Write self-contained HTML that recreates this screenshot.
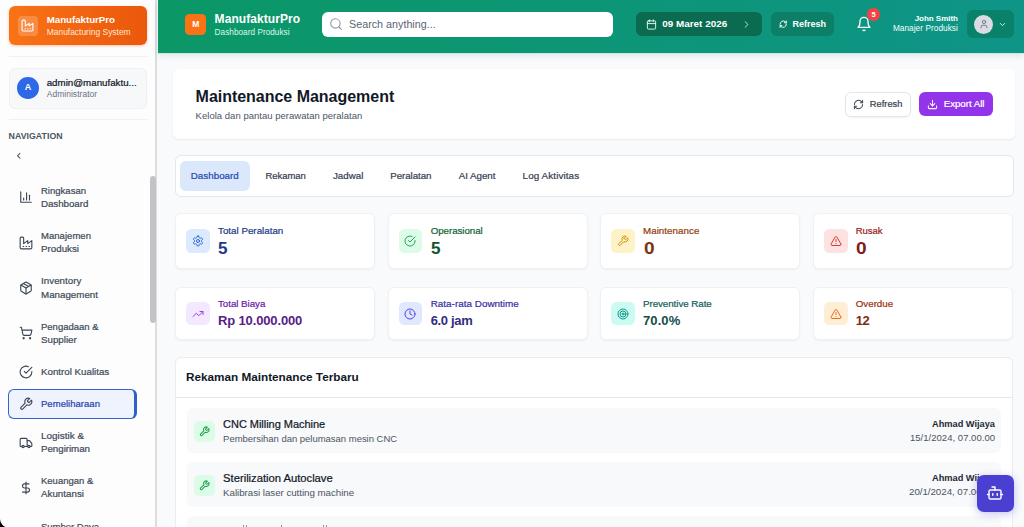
<!DOCTYPE html>
<html lang="id">
<head>
<meta charset="utf-8">
<title>ManufakturPro - Maintenance Management</title>
<style>
*{box-sizing:border-box;margin:0;padding:0}
html,body{width:1024px;height:527px;overflow:hidden;background:#f8fafc;font-family:"Liberation Sans",sans-serif;color:#1f2937}
svg{display:block;position:absolute;fill:none;stroke-linecap:round;stroke-linejoin:round}
.a{position:absolute}
.t{position:absolute;white-space:nowrap;line-height:1}
#side{position:absolute;left:0;top:0;width:157px;height:527px;background:#fdfdfe;border-right:2px solid #dcdce1}
#brand{position:absolute;left:8.5px;top:5.5px;width:138px;height:39px;border-radius:6px;background:linear-gradient(90deg,#f97316,#ea580c);box-shadow:0 1px 3px rgba(234,88,12,.35)}
#bico{position:absolute;left:17.5px;top:15.5px;width:20px;height:20px;border-radius:4px;background:rgba(255,255,255,.2)}
.hr{position:absolute;left:9px;width:138px;height:1px;background:#eef0f3}
#user{position:absolute;left:8.5px;top:67.5px;width:138px;height:41px;border-radius:6px;background:#f7f8fa;border:1px solid #eff0f3}
#av{position:absolute;left:17px;top:77px;width:21.5px;height:21.5px;border-radius:50%;background:#2c68e8}
#active{position:absolute;left:8px;top:388.5px;width:129.2px;height:30.3px;border-radius:6px;background:#eef3fe;border:1.3px solid #3463c9;border-right:3px solid #2f5fcc}
#sbar{position:absolute;left:150px;top:176px;width:5.5px;height:146.5px;border-radius:3px;background:#c3c3c7}
#top{position:absolute;left:158px;top:0;width:866px;height:52.9px;background:linear-gradient(90deg,#0b9766 0%,#0c9676 50%,#0f9488 100%);box-shadow:0 1px 0 #c4ebe0,0 3px 7px rgba(15,23,42,.09)}
#logo{position:absolute;left:185px;top:14px;width:21px;height:20.5px;border-radius:4.5px;background:#f97316}
#search{position:absolute;left:321.5px;top:11.5px;width:291.7px;height:25px;border-radius:6px;background:#fff}
#date{position:absolute;left:635.5px;top:12px;width:126.5px;height:24px;border-radius:6px;background:#0b6b51}
#hrefresh{position:absolute;left:771.3px;top:12px;width:62.7px;height:24px;border-radius:6px;background:#0c8067}
#badge{position:absolute;left:867.3px;top:8px;width:12.5px;height:12.5px;border-radius:50%;background:#ef4444}
#ubtn{position:absolute;left:967px;top:9.5px;width:47px;height:28.5px;border-radius:6px;background:#0a8169}
#uav{position:absolute;left:974px;top:14.5px;width:19px;height:19px;border-radius:50%;background:#d9dde3}
.card{position:absolute;background:#fff;border-radius:6px}
.st{position:absolute;width:200px;background:#fff;border-radius:6px;border:1px solid #eff1f4;box-shadow:0 1px 2px rgba(15,23,42,.05)}
.ib{position:absolute;width:23.5px;height:23.5px;border-radius:5.5px}
.ib svg{left:5.75px;top:5.75px;width:12px;height:12px;stroke-width:2}
.row{position:absolute;left:187px;width:814.3px;height:45px;border-radius:6px;background:#f8f9fa}
.rib{position:absolute;left:193.5px;width:21px;height:21.3px;border-radius:5px;background:#dcfce7}
.rib svg{left:5px;top:5.15px;width:11px;height:11px;stroke:#22a355;stroke-width:2.2}
.nic{width:14px;height:14px;left:18.9px;stroke:#3b4453;stroke-width:1.9}
</style>
</head>
<body>
<div id="side"></div>
<div id="brand"></div>
<div id="bico"><svg viewBox="0 0 24 24" style="left:3.5px;top:3.5px;width:13px;height:13px;stroke:#fff;stroke-width:2"><path d="M2 20a2 2 0 0 0 2 2h16a2 2 0 0 0 2-2V8l-7 5V8l-7 5V4a2 2 0 0 0-2-2H4a2 2 0 0 0-2 2Z"/><path d="M17 18h1"/><path d="M12 18h1"/><path d="M7 18h1"/></svg></div>
<div class="hr" style="top:56px"></div>
<div id="user"></div>
<div id="av"></div>
<div class="hr" style="top:119px"></div>
<svg viewBox="0 0 24 24" style="left:13.65px;top:151.05px;width:9.5px;height:9.5px;stroke:#59616e;stroke-width:2.8"><path d="M15 18l-6-6 6-6"/></svg>

<div id="active"></div>
<svg class="nic" style="top:190px" viewBox="0 0 24 24"><path d="M3 3v18h18"/><path d="M18 17V9"/><path d="M13 17V5"/><path d="M8 17v-3"/></svg>
<svg class="nic" style="top:235.5px" viewBox="0 0 24 24"><path d="M2 20a2 2 0 0 0 2 2h16a2 2 0 0 0 2-2V8l-7 5V8l-7 5V4a2 2 0 0 0-2-2H4a2 2 0 0 0-2 2Z"/><path d="M17 18h1"/><path d="M12 18h1"/><path d="M7 18h1"/></svg>
<svg class="nic" style="top:280.7px" viewBox="0 0 24 24"><path d="M21 8a2 2 0 0 0-1-1.73l-7-4a2 2 0 0 0-2 0l-7 4A2 2 0 0 0 3 8v8a2 2 0 0 0 1 1.73l7 4a2 2 0 0 0 2 0l7-4A2 2 0 0 0 21 16Z"/><path d="m3.3 7 8.7 5 8.7-5"/><path d="M12 22V12"/><path d="m7.5 4.27 9 5.15"/></svg>
<svg class="nic" style="top:326px" viewBox="0 0 24 24"><circle cx="8" cy="21" r="1"/><circle cx="19" cy="21" r="1"/><path d="M2.05 2.05h2l2.66 12.42a2 2 0 0 0 2 1.58h9.78a2 2 0 0 0 1.95-1.57l1.65-7.43H5.12"/></svg>
<svg class="nic" style="top:365px" viewBox="0 0 24 24"><path d="M22 11.08V12a10 10 0 1 1-5.93-9.14"/><path d="m9 11 3 3L22 4"/></svg>
<svg class="nic" style="top:396.5px" viewBox="0 0 24 24"><path d="M14.7 6.3a1 1 0 0 0 0 1.4l1.6 1.6a1 1 0 0 0 1.4 0l3.77-3.77a6 6 0 0 1-7.94 7.94l-6.91 6.91a2.12 2.12 0 0 1-3-3l6.91-6.91a6 6 0 0 1 7.94-7.94l-3.76 3.76z"/></svg>
<svg class="nic" style="top:435.6px" viewBox="0 0 24 24"><path d="M14 18V6a2 2 0 0 0-2-2H4a2 2 0 0 0-2 2v11a1 1 0 0 0 1 1h2"/><path d="M15 18H9"/><path d="M19 18h2a1 1 0 0 0 1-1v-3.65a1 1 0 0 0-.22-.624l-3.48-4.35A1 1 0 0 0 17.52 8H14"/><circle cx="17" cy="18" r="2"/><circle cx="7" cy="18" r="2"/></svg>
<svg class="nic" style="top:481px" viewBox="0 0 24 24"><path d="M12 2v20"/><path d="M17 5H9.5a3.5 3.5 0 0 0 0 7h5a3.5 3.5 0 0 1 0 7H6"/></svg>
<div id="sbar"></div>

<div id="top"></div>
<div id="logo"></div>
<div id="search"></div>
<svg viewBox="0 0 24 24" style="left:329px;top:17px;width:14px;height:14px;stroke:#9299a4;stroke-width:1.9"><circle cx="11" cy="11" r="8"/><path d="m21 21-4.3-4.3"/></svg>
<div id="date"></div>
<svg viewBox="0 0 24 24" style="left:646.1px;top:18.5px;width:11px;height:11px;stroke:#e6fff6;stroke-width:2"><rect x="3" y="4" width="18" height="18" rx="2"/><path d="M16 2v4"/><path d="M8 2v4"/><path d="M3 10h18"/></svg>
<svg viewBox="0 0 24 24" style="left:740.7px;top:18.5px;width:11px;height:11px;stroke:#8fd0bc;stroke-width:2.2"><path d="m9 18 6-6-6-6"/></svg>
<div id="hrefresh"></div>
<svg viewBox="0 0 24 24" style="left:779px;top:19.8px;width:8.4px;height:8.4px;stroke:#f0fffa;stroke-width:2.8"><path d="M3 12a9 9 0 0 1 15-6.7L21 8"/><path d="M21 3v5h-5"/><path d="M21 12a9 9 0 0 1-15 6.7L3 16"/><path d="M3 21v-5h5"/></svg>
<svg viewBox="0 0 24 24" style="left:855.9px;top:16px;width:16px;height:16px;stroke:#fff;stroke-width:2"><path d="M6 8a6 6 0 0 1 12 0c0 7 3 9 3 9H3s3-2 3-9"/><path d="M10.3 21a1.94 1.94 0 0 0 3.4 0"/></svg>
<div id="badge"></div>
<div id="ubtn"></div>
<div id="uav"></div>
<svg viewBox="0 0 24 24" style="left:978.5px;top:19px;width:10px;height:10px;stroke:#6b7280;stroke-width:2.2"><path d="M19 21v-2a4 4 0 0 0-4-4H9a4 4 0 0 0-4 4v2"/><circle cx="12" cy="7" r="4"/></svg>
<svg viewBox="0 0 24 24" style="left:997.6px;top:19.5px;width:9px;height:9px;stroke:#c9efe4;stroke-width:2.6"><path d="m6 9 6 6 6-6"/></svg>

<!-- page header card -->
<div class="card" style="left:173px;top:69px;width:842px;height:70px;box-shadow:0 1px 2px rgba(15,23,42,.07)"></div>
<div class="a" style="left:845px;top:91.5px;width:66px;height:25px;border-radius:6px;background:#fff;border:1px solid #e3e6eb;box-shadow:0 1px 2px rgba(15,23,42,.05)"></div>
<svg viewBox="0 0 24 24" style="left:853.25px;top:98.5px;width:11px;height:11px;stroke:#3f4754;stroke-width:2.2"><path d="M3 12a9 9 0 0 1 15-6.7L21 8"/><path d="M21 3v5h-5"/><path d="M21 12a9 9 0 0 1-15 6.7L3 16"/><path d="M3 21v-5h5"/></svg>
<div class="a" style="left:919px;top:91.8px;width:73.6px;height:24px;border-radius:6px;background:#9333ea"></div>
<svg viewBox="0 0 24 24" style="left:927.25px;top:98.5px;width:11px;height:11px;stroke:#fff;stroke-width:2.2"><path d="M21 15v4a2 2 0 0 1-2 2H5a2 2 0 0 1-2-2v-4"/><path d="m7 10 5 5 5-5"/><path d="M12 15V3"/></svg>

<!-- tabs -->
<div class="card" style="left:175px;top:155px;width:838.5px;height:41.5px;border:1px solid #e4e7ec"></div>
<div class="a" style="left:180px;top:161px;width:70px;height:29.5px;border-radius:6px;background:#dbe7fb"></div>

<!-- stats row 1 -->
<div class="st" style="left:175px;top:213px;height:56px"></div>
<div class="st" style="left:387.7px;top:213px;height:56px"></div>
<div class="st" style="left:600.3px;top:213px;height:56px"></div>
<div class="st" style="left:813px;top:213px;height:56px"></div>
<div class="ib" style="left:186px;top:229.3px;background:#dbeafe"><svg viewBox="0 0 24 24" style="stroke:#2f63d8"><path d="M12.22 2h-.44a2 2 0 0 0-2 2v.18a2 2 0 0 1-1 1.73l-.43.25a2 2 0 0 1-2 0l-.15-.08a2 2 0 0 0-2.73.73l-.22.38a2 2 0 0 0 .73 2.73l.15.1a2 2 0 0 1 1 1.72v.51a2 2 0 0 1-1 1.74l-.15.09a2 2 0 0 0-.73 2.73l.22.38a2 2 0 0 0 2.73.73l.15-.08a2 2 0 0 1 2 0l.43.25a2 2 0 0 1 1 1.73V20a2 2 0 0 0 2 2h.44a2 2 0 0 0 2-2v-.18a2 2 0 0 1 1-1.73l.43-.25a2 2 0 0 1 2 0l.15.08a2 2 0 0 0 2.73-.73l.22-.39a2 2 0 0 0-.73-2.73l-.15-.08a2 2 0 0 1-1-1.74v-.5a2 2 0 0 1 1-1.74l.15-.09a2 2 0 0 0 .73-2.73l-.22-.38a2 2 0 0 0-2.73-.73l-.15.08a2 2 0 0 1-2 0l-.43-.25a2 2 0 0 1-1-1.73V4a2 2 0 0 0-2-2z"/><circle cx="12" cy="12" r="3"/></svg></div>
<div class="ib" style="left:398.7px;top:229.3px;background:#dcfce7"><svg viewBox="0 0 24 24" style="stroke:#22a355"><path d="M22 11.08V12a10 10 0 1 1-5.93-9.14"/><path d="m9 11 3 3L22 4"/></svg></div>
<div class="ib" style="left:611.3px;top:229.3px;background:#fef3c7"><svg viewBox="0 0 24 24" style="stroke:#d98a0a"><path d="M14.7 6.3a1 1 0 0 0 0 1.4l1.6 1.6a1 1 0 0 0 1.4 0l3.77-3.77a6 6 0 0 1-7.94 7.94l-6.91 6.91a2.12 2.12 0 0 1-3-3l6.91-6.91a6 6 0 0 1 7.94-7.94l-3.76 3.76z"/></svg></div>
<div class="ib" style="left:824px;top:229.3px;background:#fee2e2"><svg viewBox="0 0 24 24" style="stroke:#dc3a3a"><path d="m21.73 18-8-14a2 2 0 0 0-3.48 0l-8 14A2 2 0 0 0 4 21h16a2 2 0 0 0 1.73-3Z"/><path d="M12 9v4"/><path d="M12 17h.01"/></svg></div>

<!-- stats row 2 -->
<div class="st" style="left:175px;top:287px;height:53px"></div>
<div class="st" style="left:387.7px;top:287px;height:53px"></div>
<div class="st" style="left:600.3px;top:287px;height:53px"></div>
<div class="st" style="left:813px;top:287px;height:53px"></div>
<div class="ib" style="left:186px;top:301.8px;background:#f3e8ff"><svg viewBox="0 0 24 24" style="stroke:#9b3fe8"><path d="m22 7-8.5 8.5-5-5L2 17"/><path d="M16 7h6v6"/></svg></div>
<div class="ib" style="left:398.7px;top:301.8px;background:#e0e7ff"><svg viewBox="0 0 24 24" style="stroke:#5048e0"><circle cx="12" cy="12" r="10"/><path d="M12 6v6l4 2"/></svg></div>
<div class="ib" style="left:611.3px;top:301.8px;background:#ccfbf1"><svg viewBox="0 0 24 24" style="stroke:#0f988b"><circle cx="12" cy="12" r="10"/><circle cx="12" cy="12" r="6"/><circle cx="12" cy="12" r="2"/></svg></div>
<div class="ib" style="left:824px;top:301.8px;background:#ffedd5"><svg viewBox="0 0 24 24" style="stroke:#ea6a1a"><path d="m21.73 18-8-14a2 2 0 0 0-3.48 0l-8 14A2 2 0 0 0 4 21h16a2 2 0 0 0 1.73-3Z"/><path d="M12 9v4"/><path d="M12 17h.01"/></svg></div>

<!-- records card -->
<div class="card" style="left:175px;top:356.5px;width:838px;height:200px;border:1px solid #e9ecf0"></div>
<div class="a" style="left:176px;top:396.8px;width:836px;height:1px;background:#e3e6ea"></div>
<div class="row" style="top:408px"></div>
<div class="row" style="top:462px"></div>
<div class="row" style="top:516px"></div>
<div class="rib" style="top:420.5px"><svg viewBox="0 0 24 24"><path d="M14.7 6.3a1 1 0 0 0 0 1.4l1.6 1.6a1 1 0 0 0 1.4 0l3.77-3.77a6 6 0 0 1-7.94 7.94l-6.91 6.91a2.12 2.12 0 0 1-3-3l6.91-6.91a6 6 0 0 1 7.94-7.94l-3.76 3.76z"/></svg></div>
<div class="rib" style="top:474.5px"><svg viewBox="0 0 24 24"><path d="M14.7 6.3a1 1 0 0 0 0 1.4l1.6 1.6a1 1 0 0 0 1.4 0l3.77-3.77a6 6 0 0 1-7.94 7.94l-6.91 6.91a2.12 2.12 0 0 1-3-3l6.91-6.91a6 6 0 0 1 7.94-7.94l-3.76 3.76z"/></svg></div>

<div class="a" style="left:243.3px;top:524.6px;width:1.1px;height:3px;background:rgba(31,41,55,.5)"></div><div class="a" style="left:246.2px;top:524.6px;width:1.1px;height:3px;background:rgba(31,41,55,.5)"></div><div class="a" style="left:281.3px;top:524.6px;width:1.1px;height:3px;background:rgba(31,41,55,.5)"></div><div class="a" style="left:323.3px;top:524.6px;width:1.1px;height:3px;background:rgba(31,41,55,.5)"></div><div class="a" style="left:326.4px;top:524.6px;width:1.1px;height:3px;background:rgba(31,41,55,.5)"></div>
<span class="t" style="left:46.7px;top:15.1px;font-size:9.75px;font-weight:bold;color:#ffffff;letter-spacing:-0.039px;">ManufakturPro</span>
<span class="t" style="left:46.7px;top:27.6px;font-size:8.5px;font-weight:normal;color:#ffe6d5;letter-spacing:-0.029px;">Manufacturing System</span>
<span class="t" style="left:46.7px;top:77.7px;font-size:9.75px;font-weight:normal;color:#111827;letter-spacing:-0.006px;-webkit-text-stroke:0.22px #111827;">admin@manufaktu...</span>
<span class="t" style="left:46.7px;top:89.5px;font-size:8.5px;font-weight:normal;color:#6b7280;letter-spacing:0.032px;">Administrator</span>
<span class="t" style="left:8.6px;top:131.5px;font-size:8.75px;font-weight:bold;color:#4b5563;letter-spacing:0.036px;">NAVIGATION</span>
<span class="t" style="left:41.0px;top:186.0px;font-size:9.5px;font-weight:normal;color:#424b59;letter-spacing:0.012px;-webkit-text-stroke:0.22px #424b59;">Ringkasan</span>
<span class="t" style="left:41.0px;top:198.7px;font-size:9.75px;font-weight:normal;color:#424b59;letter-spacing:-0.045px;-webkit-text-stroke:0.22px #424b59;">Dashboard</span>
<span class="t" style="left:41.0px;top:231.3px;font-size:9.5px;font-weight:normal;color:#424b59;letter-spacing:0.04px;-webkit-text-stroke:0.22px #424b59;">Manajemen</span>
<span class="t" style="left:41.0px;top:244.2px;font-size:9.75px;font-weight:normal;color:#424b59;letter-spacing:0.008px;-webkit-text-stroke:0.22px #424b59;">Produksi</span>
<span class="t" style="left:41.0px;top:276.1px;font-size:9.75px;font-weight:normal;color:#424b59;letter-spacing:0.043px;-webkit-text-stroke:0.22px #424b59;">Inventory</span>
<span class="t" style="left:41.0px;top:289.5px;font-size:9.75px;font-weight:normal;color:#424b59;letter-spacing:0.008px;-webkit-text-stroke:0.22px #424b59;">Management</span>
<span class="t" style="left:41.0px;top:322.0px;font-size:9.5px;font-weight:normal;color:#424b59;letter-spacing:-0.009px;-webkit-text-stroke:0.22px #424b59;">Pengadaan &amp;</span>
<span class="t" style="left:41.0px;top:334.7px;font-size:9.75px;font-weight:normal;color:#424b59;letter-spacing:-0.01px;-webkit-text-stroke:0.22px #424b59;">Supplier</span>
<span class="t" style="left:41.0px;top:366.7px;font-size:9.75px;font-weight:normal;color:#424b59;letter-spacing:-0.006px;-webkit-text-stroke:0.22px #424b59;">Kontrol Kualitas</span>
<span class="t" style="left:41.0px;top:399.2px;font-size:9.5px;font-weight:normal;color:#2a44a8;letter-spacing:0.031px;-webkit-text-stroke:0.22px #2a44a8;">Pemeliharaan</span>
<span class="t" style="left:41.0px;top:430.6px;font-size:9.9px;font-weight:normal;color:#424b59;letter-spacing:0.017px;-webkit-text-stroke:0.22px #424b59;">Logistik &amp;</span>
<span class="t" style="left:41.0px;top:443.7px;font-size:9.75px;font-weight:normal;color:#424b59;letter-spacing:-0.033px;-webkit-text-stroke:0.22px #424b59;">Pengiriman</span>
<span class="t" style="left:41.0px;top:476.4px;font-size:9.5px;font-weight:normal;color:#424b59;letter-spacing:0.0px;-webkit-text-stroke:0.22px #424b59;">Keuangan &amp;</span>
<span class="t" style="left:41.0px;top:489.0px;font-size:9.75px;font-weight:normal;color:#424b59;letter-spacing:0.019px;-webkit-text-stroke:0.22px #424b59;">Akuntansi</span>
<span class="t" style="left:41.0px;top:522.0px;font-size:9.5px;font-weight:normal;color:#424b59;letter-spacing:-0.009px;-webkit-text-stroke:0.22px #424b59;">Sumber Daya</span>
<span class="t" style="left:192.2px;top:20.0px;font-size:8.5px;font-weight:bold;color:#ffffff;letter-spacing:0px;">M</span>
<span class="t" style="left:24.7px;top:83.3px;font-size:9px;font-weight:bold;color:#ffffff;letter-spacing:0px;">A</span>
<span class="t" style="left:214.6px;top:13.2px;font-size:12.0px;font-weight:bold;color:#ffffff;letter-spacing:0.062px;">ManufakturPro</span>
<span class="t" style="left:214.6px;top:29.0px;font-size:8.25px;font-weight:normal;color:#d9f7ec;letter-spacing:0.014px;">Dashboard Produksi</span>
<span class="t" style="left:349.0px;top:18.9px;font-size:10.75px;font-weight:normal;color:#5b6472;letter-spacing:0.002px;">Search anything...</span>
<span class="t" style="left:662.2px;top:19.0px;font-size:9.9px;font-weight:bold;color:#ffffff;letter-spacing:0.017px;">09 Maret 2026</span>
<span class="t" style="left:792.4px;top:19.8px;font-size:9.0px;font-weight:bold;color:#ffffff;letter-spacing:0.012px;">Refresh</span>
<span class="t" style="left:871.4px;top:10.7px;font-size:7.5px;font-weight:bold;color:#ffffff;letter-spacing:0px;">5</span>
<span class="t" style="left:914.7px;top:14.6px;font-size:8.0px;font-weight:bold;color:#ffffff;letter-spacing:-0.036px;">John Smith</span>
<span class="t" style="left:892.9px;top:24.8px;font-size:8.25px;font-weight:normal;color:#f3fffb;letter-spacing:0.05px;">Manajer Produksi</span>
<span class="t" style="left:195.6px;top:88.5px;font-size:16.0px;font-weight:bold;color:#111827;letter-spacing:-0.025px;">Maintenance Management</span>
<span class="t" style="left:195.6px;top:111.1px;font-size:9.5px;font-weight:normal;color:#4b5563;letter-spacing:0.023px;">Kelola dan pantau perawatan peralatan</span>
<span class="t" style="left:869.8px;top:99.6px;font-size:9.25px;font-weight:normal;color:#374151;letter-spacing:0.03px;-webkit-text-stroke:0.22px #374151;">Refresh</span>
<span class="t" style="left:943.7px;top:99.1px;font-size:9.75px;font-weight:normal;color:#ffffff;letter-spacing:-0.049px;-webkit-text-stroke:0.22px #ffffff;">Export All</span>
<span class="t" style="left:190.8px;top:171.1px;font-size:9.75px;font-weight:normal;color:#2747b5;letter-spacing:0.033px;-webkit-text-stroke:0.22px #2747b5;">Dashboard</span>
<span class="t" style="left:265.4px;top:171.4px;font-size:9.5px;font-weight:normal;color:#374151;letter-spacing:-0.025px;-webkit-text-stroke:0.22px #374151;">Rekaman</span>
<span class="t" style="left:332.9px;top:171.1px;font-size:9.75px;font-weight:normal;color:#374151;letter-spacing:0.023px;-webkit-text-stroke:0.22px #374151;">Jadwal</span>
<span class="t" style="left:390.2px;top:171.1px;font-size:9.75px;font-weight:normal;color:#374151;letter-spacing:-0.05px;-webkit-text-stroke:0.22px #374151;">Peralatan</span>
<span class="t" style="left:458.7px;top:171.1px;font-size:9.75px;font-weight:normal;color:#374151;letter-spacing:-0.009px;-webkit-text-stroke:0.22px #374151;">AI Agent</span>
<span class="t" style="left:522.6px;top:171.0px;font-size:9.9px;font-weight:normal;color:#374151;letter-spacing:0.088px;-webkit-text-stroke:0.22px #374151;">Log Aktivitas</span>
<span class="t" style="left:218.0px;top:225.9px;font-size:9.75px;font-weight:normal;color:#1e3a8a;letter-spacing:0.017px;-webkit-text-stroke:0.22px #1e3a8a;">Total Peralatan</span>
<span class="t" style="left:218.0px;top:240.6px;font-size:16px;font-weight:bold;color:#1e3a8a;letter-spacing:0px;transform-origin:0 0;transform:scaleX(1.067);">5</span>
<span class="t" style="left:430.7px;top:225.9px;font-size:9.75px;font-weight:normal;color:#166534;letter-spacing:-0.053px;-webkit-text-stroke:0.22px #166534;">Operasional</span>
<span class="t" style="left:430.7px;top:240.6px;font-size:16px;font-weight:bold;color:#14532d;letter-spacing:0px;transform-origin:0 0;transform:scaleX(1.067);">5</span>
<span class="t" style="left:643.0px;top:225.9px;font-size:9.75px;font-weight:normal;color:#92400e;letter-spacing:0.051px;-webkit-text-stroke:0.22px #92400e;">Maintenance</span>
<span class="t" style="left:643.5px;top:240.6px;font-size:16px;font-weight:bold;color:#78350f;letter-spacing:0px;transform-origin:0 0;transform:scaleX(1.190);">0</span>
<span class="t" style="left:855.8px;top:226.2px;font-size:9.5px;font-weight:normal;color:#991b1b;letter-spacing:-0.048px;-webkit-text-stroke:0.22px #991b1b;">Rusak</span>
<span class="t" style="left:856.3px;top:240.6px;font-size:16px;font-weight:bold;color:#7f1d1d;letter-spacing:0px;transform-origin:0 0;transform:scaleX(1.190);">0</span>
<span class="t" style="left:218.0px;top:299.1px;font-size:9.75px;font-weight:normal;color:#6b21a8;letter-spacing:-0.037px;-webkit-text-stroke:0.22px #6b21a8;">Total Biaya</span>
<span class="t" style="left:218.0px;top:313.5px;font-size:13px;font-weight:bold;color:#581c87;letter-spacing:-0.14px;">Rp 10.000.000</span>
<span class="t" style="left:430.7px;top:299.0px;font-size:9.9px;font-weight:normal;color:#3730a3;letter-spacing:0.016px;-webkit-text-stroke:0.22px #3730a3;">Rata-rata Downtime</span>
<span class="t" style="left:430.7px;top:313.5px;font-size:13px;font-weight:bold;color:#312e81;letter-spacing:-0.342px;">6.0 jam</span>
<span class="t" style="left:643.0px;top:299.1px;font-size:9.75px;font-weight:normal;color:#115e59;letter-spacing:-0.045px;-webkit-text-stroke:0.22px #115e59;">Preventive Rate</span>
<span class="t" style="left:643.0px;top:313.5px;font-size:13px;font-weight:bold;color:#134e4a;letter-spacing:0.085px;">70.0%</span>
<span class="t" style="left:855.8px;top:299.1px;font-size:9.75px;font-weight:normal;color:#9a3412;letter-spacing:-0.015px;-webkit-text-stroke:0.22px #9a3412;">Overdue</span>
<span class="t" style="left:855.8px;top:313.5px;font-size:13px;font-weight:bold;color:#7c2d12;letter-spacing:-0.6px;">12</span>
<span class="t" style="left:185.9px;top:370.9px;font-size:11.75px;font-weight:bold;color:#111827;letter-spacing:-0.001px;">Rekaman Maintenance Terbaru</span>
<span class="t" style="left:223.1px;top:419.4px;font-size:11.0px;font-weight:normal;color:#111827;letter-spacing:-0.037px;-webkit-text-stroke:0.22px #111827;">CNC Milling Machine</span>
<span class="t" style="left:223.1px;top:434.2px;font-size:9.5px;font-weight:normal;color:#4b5563;letter-spacing:-0.022px;">Pembersihan dan pelumasan mesin CNC</span>
<span class="t" style="left:932.0px;top:420.2px;font-size:9.25px;font-weight:bold;color:#1f2937;letter-spacing:-0.013px;">Ahmad Wijaya</span>
<span class="t" style="left:910.0px;top:433.0px;font-size:9.5px;font-weight:normal;color:#4b5563;letter-spacing:0.025px;">15/1/2024, 07.00.00</span>
<span class="t" style="left:223.1px;top:473.2px;font-size:11.25px;font-weight:normal;color:#111827;letter-spacing:-0.02px;-webkit-text-stroke:0.22px #111827;">Sterilization Autoclave</span>
<span class="t" style="left:223.1px;top:487.9px;font-size:9.75px;font-weight:normal;color:#4b5563;letter-spacing:-0.04px;">Kalibrasi laser cutting machine</span>
<span class="t" style="left:932.0px;top:473.7px;font-size:9.25px;font-weight:bold;color:#1f2937;letter-spacing:-0.013px;">Ahmad Wijaya</span>
<span class="t" style="left:909.0px;top:486.7px;font-size:9.75px;font-weight:normal;color:#4b5563;letter-spacing:-0.039px;">20/1/2024, 07.00.00</span>

<!-- floating bot button -->
<div class="a" style="left:977px;top:475px;width:36.5px;height:36.5px;border-radius:7px;background:#4a3fd1;box-shadow:0 2px 8px rgba(67,56,202,.30)"></div>
<svg viewBox="0 0 24 24" style="left:986.3px;top:483.5px;width:18px;height:18px;stroke:#fff;stroke-width:1.9"><path d="M12 8V4H8"/><rect width="16" height="12" x="4" y="8" rx="2"/><path d="M2 14h2"/><path d="M20 14h2"/><path d="M15 13v2"/><path d="M9 13v2"/></svg>

<!-- screen corner -->
<svg style="left:0;top:518.5px;width:8.5px;height:8.5px" viewBox="0 0 8 8"><path d="M0 0 A8 8 0 0 0 8 8 L0 8 Z" fill="#000" stroke="none"/></svg>
</body>
</html>
